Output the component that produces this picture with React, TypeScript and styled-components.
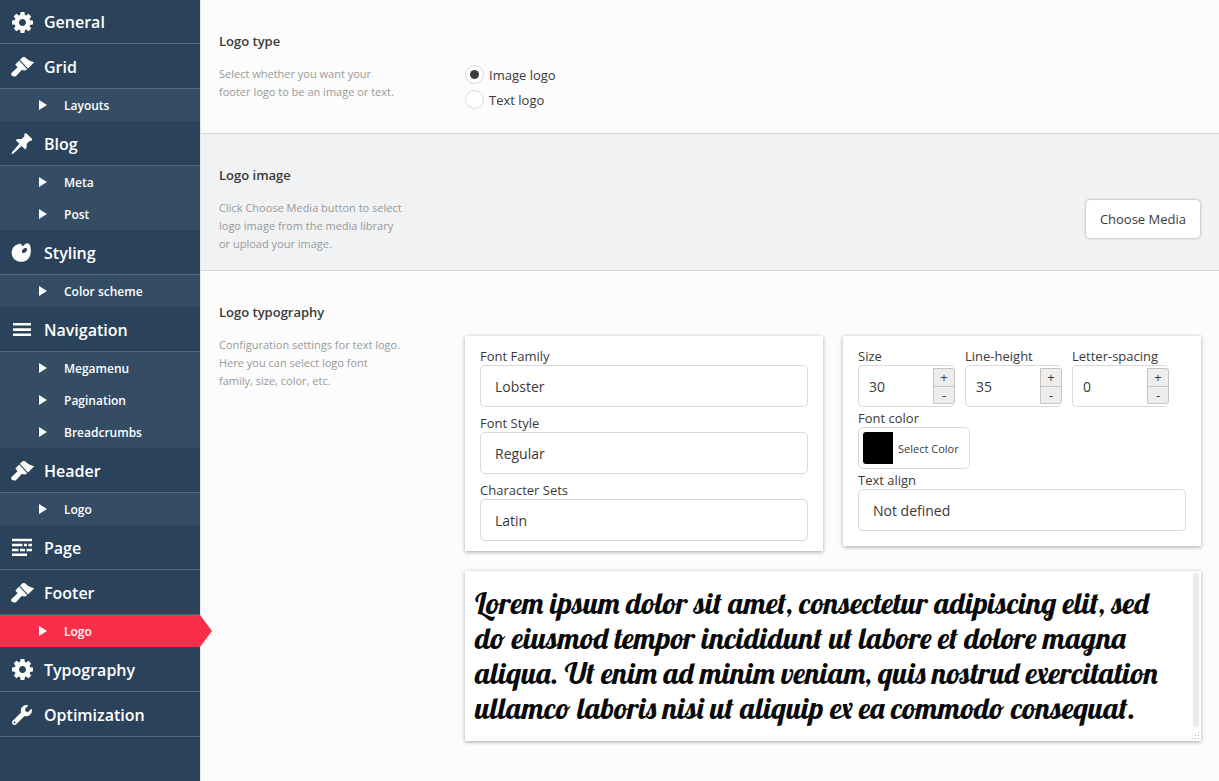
import React, { useState } from "react";
import styled, { createGlobalStyle, css } from "styled-components";
import { FaWrench } from "react-icons/fa";

const GlobalStyle = createGlobalStyle`
  *, *::before, *::after { box-sizing: border-box; }
  body {
    margin: 0;
    background: #fcfcfc;
    color: #3a3a3a;
    font-family: "Open Sans", "Noto Sans", sans-serif;
    font-size: 13px;
  }
  button, input, select, textarea { font-family: inherit; color: inherit; margin: 0; }
`;

/* ---------- icons ---------- */

const CogIcon = () => (
  <svg width="21" height="21" viewBox="0 128 1536 1536" fill="currentColor" fillRule="evenodd" aria-hidden="true">
    <path d="M1024 896C1024 1037 909 1152 768 1152S512 1037 512 896 627 640 768 640 1024 755 1024 896zM1536 787v222q0 12-8 23t-20 13l-185 28q-19 54-39 91 35 50 107 138 10 12 10 25t-9 23q-27 37-99 108t-94 71q-12 0-26-9l-138-108q-44 23-91 38-16 136-29 186-7 28-36 28h-222q-14 0-24.500-8.500t-11.500-21.500l-28-184q-49-16-90-37l-141 107q-10 9-25 9-14 0-25-11-126-114-165-168-7-10-7-23 0-12 8-23 15-21 51-66.500t54-70.500q-27-50-41-99l-183-27q-13-2-21-12.500t-8-23.500v-222q0-12 8-23t19-13l186-28q14-46 39-92-40-57-107-138-10-12-10-24 0-10 9-23 26-36 98.500-107.500t94.500-71.500q13 0 26 10l138 107q44-23 91-38 16-136 29-186 7-28 36-28h222q14 0 24.500 8.500t11.500 21.500l28 184q49 16 90 37l142-107q9-9 24-9 13 0 25 10 129 119 165 170 7 8 7 22 0 12-8 23-15 21-51 66.500t-54 70.500q26 50 41 98l183 28q13 2 21 12.500t8 23.500z" />
  </svg>
);

const BrushIcon = () => (
  <svg width="24" height="24" viewBox="0 0 24 24" overflow="visible" fill="currentColor" aria-hidden="true">
    <path d="M5.300 9.600 9.200 5.400 17.200 14.200 15.200 15.400 11.700 15 6.200 21C4.900 22.100 1.400 21.600 1.100 19.600 1 18.600 1.600 17.900 2.300 17.200L7.600 12.200Z" />
    <path d="M9.900 4.700 12.300 2.400C13.500 1.500 15.300 2 16.200 3.200 17.800 5.300 20.500 6.100 24.200 7.200L18 13.500Z" />
  </svg>
);

const PinIcon = () => (
  <svg width="24" height="24" viewBox="0 0 24 24" fill="currentColor" aria-hidden="true">
    <path d="M14.800 1.600C15.600 1 16.400 1.300 17 1.900L21.700 6.500C22.400 7.200 22.400 8.100 21.700 8.600 21 9.100 20.200 8.900 19.500 8.900L16.600 12C17 13.800 16.800 16 15.300 17.500L11.500 14 3.400 21.600 1.300 22.300 2 20.200 9.300 11.700 5.800 8.200C7.300 6.900 9.500 6.900 11.300 7.300L14.500 4.300C14.400 3.400 14.100 2.300 14.800 1.600Z" />
  </svg>
);

const PaletteIcon = () => (
  <svg width="24" height="24" viewBox="0 0 24 24" fill="currentColor" fillRule="evenodd" aria-hidden="true">
    <path d="M10.300 2.800C5.300 3.200 1.700 6.900 1.700 11.700 1.700 17.100 5.800 20.800 11.300 20.800 17.500 20.800 20.900 16 20.900 9.600 20.900 5.200 19.800 2.200 17.300 2.200 15.700 2.200 14.700 3.600 13.700 4.500 13 5.200 12.200 5.200 11.800 4.300 11.500 3.500 11.200 2.800 10.300 2.800ZM16.700 7.400C17.700 8.500 16.700 10.100 15.700 11 14.600 12 13 12.300 12.200 11.400 11.400 10.500 12.100 9.200 13.100 8.200 14.200 7.100 15.800 6.400 16.700 7.400Z" />
  </svg>
);

const BarsIcon = () => (
  <svg width="24" height="24" viewBox="0 0 24 24" fill="currentColor" aria-hidden="true">
    <path d="M3 5h18v2.600H3zM3 10.300h18v2.600H3zM3 15.400h18v2.600H3z" />
  </svg>
);

const PageIcon = () => (
  <svg width="24" height="24" viewBox="0 0 24 24" fill="currentColor" aria-hidden="true">
    <path d="M2 2.700h20v2.600H2zM2 7.700h10.500v2.600H2zM14 7.700h3v2.600h-3zM18.500 7.700h3.500v2.600h-3.500zM2 12.700h6.500v2.600H2zM10 12.700h5v2.600h-5zM16.500 12.700h5.500v2.600h-5.500zM2 17.500h15v2.600H2z" />
  </svg>
);

const icons: Record<string, React.ReactNode> = {
  cog: <CogIcon />,
  brush: <BrushIcon />,
  pin: <PinIcon />,
  palette: <PaletteIcon />,
  bars: <BarsIcon />,
  page: <PageIcon />,
  wrench: <FaWrench size={20} />,
};

/* ---------- layout ---------- */

const Layout = styled.div`
  display: grid;
  grid-template-columns: 201px minmax(0, 1fr);
  min-height: 100vh;
`;

const Sidebar = styled.nav`
  background: #2b425b;
  border-right: 1px solid #e4e6e8;
`;

const List = styled.ul`
  list-style: none;
  margin: 0;
  padding: 0;
`;

const MenuLink = styled.a<{ $first?: boolean }>`
  display: flex;
  align-items: center;
  gap: 10px;
  height: ${(p) => (p.$first ? 44 : 45)}px;
  padding: 1px 0 0 10px;
  border-bottom: 1px solid #4f6880;
  color: #fff;
  font-size: 16px;
  font-weight: 600;
  text-decoration: none;
`;

const IconSlot = styled.span`
  display: flex;
  align-items: center;
  justify-content: center;
  width: 24px;
  height: 24px;
  color: #fdfdfa;

  svg { flex: none; }
`;

const SubLink = styled.a<{ $active?: boolean }>`
  position: relative;
  display: flex;
  align-items: center;
  gap: 17px;
  height: 32px;
  padding-left: 39px;
  background: #344d65;
  color: #fff;
  font-size: 12px;
  font-weight: 600;
  text-decoration: none;

  &::before {
    content: "";
    border-left: 8px solid #fff;
    border-top: 5px solid transparent;
    border-bottom: 5px solid transparent;
  }

  ${(p) =>
    p.$active &&
    css`
      background: #f92f4a;
      &::after {
        content: "";
        position: absolute;
        left: 100%;
        top: 0;
        border-left: 12px solid #f92f4a;
        border-top: 16px solid transparent;
        border-bottom: 16px solid transparent;
      }
    `}
`;

const Section = styled.section<{ $shaded?: boolean; $last?: boolean }>`
  display: grid;
  grid-template-columns: 246px minmax(0, 1fr);
  padding: 31px 18px 17px;
  background: ${(p) => (p.$shaded ? "#f1f2f4" : "#fcfcfc")};
  border-bottom: ${(p) => (p.$last ? "0" : "1px solid #d2d4d5")};
`;

const Title = styled.h2`
  margin: 0 0 14px;
  font-size: 13px;
  line-height: 20px;
  font-weight: 600;
`;

const Description = styled.p`
  margin: 0;
  max-width: 184px;
  color: #999;
  font-size: 11px;
  line-height: 18px;
`;

const Field = styled.div`
  padding-top: 34px;
`;

/* ---------- controls ---------- */

const RadioGroup = styled.div`
  padding: 31px 0 4px;
`;

const RadioLabel = styled.label`
  display: flex;
  align-items: center;
  gap: 5px;
  height: 25px;
`;

const Radio = styled.input`
  appearance: none;
  display: grid;
  place-items: center;
  width: 19px;
  height: 19px;
  border: 1px solid #dcdcdc;
  border-radius: 50%;
  background: #fff;

  &:checked::before {
    content: "";
    width: 9px;
    height: 9px;
    border-radius: 50%;
    background: #3d3d3d;
  }
`;

const MediaRow = styled.div`
  display: flex;
  justify-content: flex-end;
`;

const MediaButton = styled.button`
  height: 40px;
  padding: 0 14px;
  background: #fff;
  border: 1px solid #d4d4d4;
  border-radius: 5px;
  box-shadow: 0 0 2px rgba(0, 0, 0, 0.2);
  font-size: 13px;
`;

const Cards = styled.div`
  display: flex;
  align-items: flex-start;
  gap: 20px;
  margin-bottom: 20px;
`;

const Card = styled.div<{ $gap: number; $bottom: number }>`
  flex: 1;
  min-width: 0;
  display: flex;
  flex-direction: column;
  gap: ${(p) => p.$gap}px;
  padding: 11px 15px ${(p) => p.$bottom}px;
  background: #fff;
  box-shadow: 0 1px 4px rgba(0, 0, 0, 0.35);
`;

const Label = styled.label`
  display: block;
  height: 18px;
  line-height: 18px;
  font-size: 13px;
`;

const boxed = css`
  height: 42px;
  background: #fff;
  border: 1px solid #d9d9d9;
  border-radius: 5px;
  font-size: 14px;
`;

const Select = styled.select`
  ${boxed}
  appearance: none;
  display: block;
  width: 100%;
  padding: 0 14px;
`;

const NumberRow = styled.div`
  display: flex;
  gap: 10px;
`;

const NumberItem = styled.div`
  width: 97px;
  white-space: nowrap;
`;

const NumberBox = styled.div`
  ${boxed}
  display: flex;
  align-items: center;
  border-right: 0;
`;

const NumberInput = styled.input`
  flex: 1;
  min-width: 0;
  padding: 0 0 0 10px;
  border: 0;
  background: transparent;
  font-size: 14px;
`;

const Spinner = styled.div`
  display: flex;
  flex-direction: column;
  width: 22px;
  height: 36px;
  border: 1px solid #c4c4c4;
  border-radius: 0 3px 3px 0;
  background: #ededed;
`;

const SpinButton = styled.button`
  flex: 1;
  padding: 0;
  border: 0;
  background: transparent;
  font-size: 13px;
  line-height: 16px;

  & + & { border-top: 1px solid #c4c4c4; }
`;

const ColorButton = styled.button`
  ${boxed}
  display: flex;
  align-items: center;
  gap: 5px;
  padding: 0 10px 0 4px;
  font-size: 11px;
`;

const Swatch = styled.span`
  width: 30px;
  height: 32px;
  border-radius: 3px 0 0 3px;
  background: #000;
`;

const Preview = styled.div`
  position: relative;
  background: #fff;
  box-shadow: 0 1px 4px rgba(0, 0, 0, 0.35);
`;

const PreviewText = styled.textarea`
  display: block;
  width: 100%;
  height: 170px;
  padding: 15px 20px 15px 10px;
  border: 0;
  background: transparent;
  color: #0a0a0a;
  font-family: Lobster, "Liberation Serif", serif;
  font-size: 30px;
  line-height: 35px;
  resize: none;
  overflow: hidden;
`;

const ScrollTrack = styled.span`
  position: absolute;
  top: 2px;
  right: 2px;
  bottom: 14px;
  width: 6px;
  border-radius: 3px;
  background: #ebebeb;
`;

const Grip = styled.svg`
  position: absolute;
  right: 1px;
  bottom: 1px;
  fill: #b5b5b5;
`;

/* ---------- data ---------- */

type MenuItem = { label: string; icon: string; children?: string[]; active?: string };

const menu: MenuItem[] = [
  { label: "General", icon: "cog" },
  { label: "Grid", icon: "brush", children: ["Layouts"] },
  { label: "Blog", icon: "pin", children: ["Meta", "Post"] },
  { label: "Styling", icon: "palette", children: ["Color scheme"] },
  { label: "Navigation", icon: "bars", children: ["Megamenu", "Pagination", "Breadcrumbs"] },
  { label: "Header", icon: "brush", children: ["Logo"] },
  { label: "Page", icon: "page" },
  { label: "Footer", icon: "brush", children: ["Logo"], active: "Logo" },
  { label: "Typography", icon: "cog" },
  { label: "Optimization", icon: "wrench" },
];

const SelectField = ({ id, label, value }: { id: string; label: string; value: string }) => (
  <div>
    <Label htmlFor={id}>{label}</Label>
    <Select id={id} defaultValue={value}>
      <option>{value}</option>
    </Select>
  </div>
);

const NumberField = ({ id, label, initial }: { id: string; label: string; initial: number }) => {
  const [value, setValue] = useState(initial);
  return (
    <NumberItem>
      <Label htmlFor={id}>{label}</Label>
      <NumberBox>
        <NumberInput id={id} value={value} onChange={(e) => setValue(Number(e.target.value) || 0)} />
        <Spinner>
          <SpinButton type="button" onClick={() => setValue(value + 1)}>+</SpinButton>
          <SpinButton type="button" onClick={() => setValue(value - 1)}>-</SpinButton>
        </Spinner>
      </NumberBox>
    </NumberItem>
  );
};

export default function App() {
  return (
    <>
      <GlobalStyle />
      <Layout>
        <Sidebar>
          <List>
            {menu.map((item, i) => (
              <li key={item.label}>
                <MenuLink href="#" $first={i === 0}>
                  <IconSlot>{icons[item.icon]}</IconSlot>
                  {item.label}
                </MenuLink>
                {item.children && (
                  <List>
                    {item.children.map((child) => (
                      <li key={child}>
                        <SubLink href="#" $active={item.active === child}>{child}</SubLink>
                      </li>
                    ))}
                  </List>
                )}
              </li>
            ))}
          </List>
        </Sidebar>

        <main>
          <Section>
            <div>
              <Title>Logo type</Title>
              <Description>Select whether you want your footer logo to be an image or text.</Description>
            </div>
            <RadioGroup>
              <RadioLabel>
                <Radio type="radio" name="logo-type" defaultChecked />
                Image logo
              </RadioLabel>
              <RadioLabel>
                <Radio type="radio" name="logo-type" />
                Text logo
              </RadioLabel>
            </RadioGroup>
          </Section>

          <Section $shaded>
            <div>
              <Title>Logo image</Title>
              <Description>
                Click Choose Media button to select logo image from the media library or upload your image.
              </Description>
            </div>
            <Field>
              <MediaRow>
                <MediaButton type="button">Choose Media</MediaButton>
              </MediaRow>
            </Field>
          </Section>

          <Section $last>
            <div>
              <Title>Logo typography</Title>
              <Description>
                Configuration settings for text logo. Here you can select logo font family, size, color, etc.
              </Description>
            </div>
            <Field>
              <Cards>
                <Card $gap={7} $bottom={10}>
                  <SelectField id="font-family" label="Font Family" value="Lobster" />
                  <SelectField id="font-style" label="Font Style" value="Regular" />
                  <SelectField id="character-sets" label="Character Sets" value="Latin" />
                </Card>
                <Card $gap={2} $bottom={15}>
                  <NumberRow>
                    <NumberField id="size" label="Size" initial={30} />
                    <NumberField id="line-height" label="Line-height" initial={35} />
                    <NumberField id="letter-spacing" label="Letter-spacing" initial={0} />
                  </NumberRow>
                  <div>
                    <Label htmlFor="font-color">Font color</Label>
                    <ColorButton id="font-color" type="button">
                      <Swatch />
                      Select Color
                    </ColorButton>
                  </div>
                  <SelectField id="text-align" label="Text align" value="Not defined" />
                </Card>
              </Cards>
              <Preview>
                <PreviewText
                  aria-label="Typography preview"
                  spellCheck={false}
                  defaultValue="Lorem ipsum dolor sit amet, consectetur adipiscing elit, sed do eiusmod tempor incididunt ut labore et dolore magna aliqua. Ut enim ad minim veniam, quis nostrud exercitation ullamco laboris nisi ut aliquip ex ea commodo consequat."
                />
                <ScrollTrack />
                <Grip width="8" height="8" viewBox="0 0 8 8" aria-hidden="true">
                  <path d="M6 0h1v1H6zM3 3h1v1H3zM6 3h1v1H6zM0 6h1v1H0zM3 6h1v1H3zM6 6h1v1H6z" />
                </Grip>
              </Preview>
            </Field>
          </Section>
        </main>
      </Layout>
    </>
  );
}
